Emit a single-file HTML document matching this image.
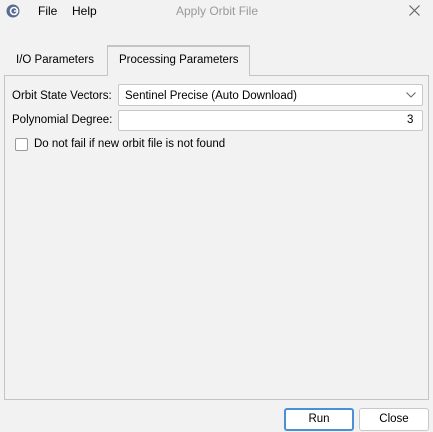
<!DOCTYPE html>
<html><head><style>
body{margin:0;width:433px;height:432px;background:#f2f2f2;font-family:"Liberation Sans",sans-serif;font-size:11.5px;color:#000;position:relative;overflow:hidden}
.a{position:absolute}
.box{position:absolute;background:#fff;border:1px solid #c8c8c8;border-radius:2px;box-sizing:border-box}
.btn{position:absolute;background:#fff;border:1px solid #c8c8c8;border-radius:3px;box-sizing:border-box;text-align:center;line-height:21px}
</style></head><body>
<svg class="a" style="left:6px;top:4px" width="14" height="14" viewBox="0 0 14 14"><circle cx="7" cy="7" r="6.5" fill="#5a6b94"/><circle cx="8" cy="7" r="3.5" fill="none" stroke="#fff" stroke-width="1.6"/><rect x="8" y="6.3" width="4" height="1.4" fill="#fff"/></svg>
<div class="a" style="left:38px;top:4px;font-size:12px">File</div>
<div class="a" style="left:72px;top:4px;font-size:12px">Help</div>
<div class="a" style="left:176px;top:4px;color:#999;font-size:12px">Apply Orbit File</div>
<svg class="a" style="left:409px;top:5px" width="11" height="11"><path d="M0.5 0.5L10.5 10.5M10.5 0.5L0.5 10.5" stroke="#666" stroke-width="1.2"/></svg>
<div class="a" style="left:4px;top:75px;width:423px;height:323px;border:1px solid #c4c4c4"></div>
<div class="a" style="left:16px;top:54px">I/O Parameters</div>
<div class="a" style="left:107px;top:45px;width:143px;height:31px;border:1px solid #c4c4c4;border-top:2px solid #c4c4c4;border-bottom:none;background:#f2f2f2;box-sizing:border-box"></div>
<div class="a" style="left:119px;top:54px">Processing Parameters</div>
<div class="a" style="left:12px;top:90px">Orbit State Vectors:</div>
<div class="box" style="left:118px;top:84px;width:305px;height:22px"></div>
<div class="a" style="left:125px;top:90px">Sentinel Precise (Auto Download)</div>
<svg class="a" style="left:406px;top:92px" width="10" height="6"><path d="M0.5 0.5 L5 5 L9.5 0.5" fill="none" stroke="#666"/></svg>
<div class="a" style="left:12px;top:114px">Polynomial Degree:</div>
<div class="box" style="left:118px;top:110px;width:305px;height:21px"></div>
<div class="a" style="left:407px;top:114px">3</div>
<div class="box" style="left:15px;top:138px;width:13px;height:13px;border-color:#999"></div>
<div class="a" style="left:34px;top:138px">Do not fail if new orbit file is not found</div>
<div class="btn" style="left:284px;top:408px;width:70px;height:23px;border:2px solid #4a90d9;line-height:19px">Run</div>
<div class="btn" style="left:359px;top:408px;width:70px;height:23px">Close</div>
</body></html>
